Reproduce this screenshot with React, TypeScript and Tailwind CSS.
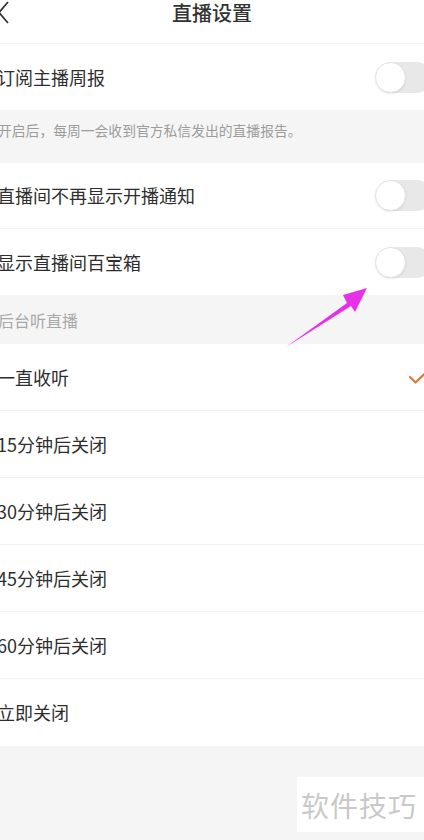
import React from "react";

const font = { fontFamily: '"Noto Sans CJK SC", "Noto Sans", sans-serif' };

function Toggle() {
  return (
    <div className="relative h-[31px] w-[56px] shrink-0 rounded-full bg-[#e8e8e8] -mr-[8px]">
      <div className="absolute left-[-1px] top-0 h-[31px] w-[31px] rounded-full bg-white border border-[#e2e2e2] shadow-[0_1px_2px_rgba(0,0,0,0.08)]" />
    </div>
  );
}

function ToggleRow({ label, border }: { label: string; border?: boolean }) {
  return (
    <div className={`flex h-[66px] items-center justify-between bg-white ${border ? "border-b border-[#efefef]" : ""}`}>
      <span className="-ml-[3px] text-[18px] text-[#2e2e2e]">{label}</span>
      <Toggle />
    </div>
  );
}

function OptionRow({ label, checked, last }: { label: string; checked?: boolean; last?: boolean }) {
  return (
    <div className={`flex items-center justify-between bg-white ${last ? "h-[67px]" : "h-[67px] border-b border-[#efefef]"}`}>
      <span className="-ml-[3px] text-[18px] text-[#2e2e2e]">{label}</span>
      {checked && (
        <svg width="22" height="16" viewBox="0 0 22 16" className="-mr-[6px]">
          <polyline points="2,8 7.5,13.5 19,2.5" fill="none" stroke="#e07a3c" strokeWidth="2.2" strokeLinecap="round" strokeLinejoin="round" />
        </svg>
      )}
    </div>
  );
}

export default function App() {
  return (
    <div className="relative h-[840px] w-[424px] overflow-hidden bg-[#f5f5f5]" style={font}>
      {/* header */}
      <div className="relative flex h-[44px] items-start justify-center border-b border-[#f0f0f0] bg-white pt-[1px]">
        <svg width="10" height="26" viewBox="0 0 10 26" className="absolute left-0 top-0">
          <polyline points="8,2 -1,12.5 8,23" fill="none" stroke="#333333" strokeWidth="1.8" />
        </svg>
        <span className="text-[20px] leading-[24px] font-medium text-[#333333]">直播设置</span>
      </div>

      <ToggleRow label="订阅主播周报" />

      <div className="h-[53px] bg-[#f5f5f5] pt-[10px]">
        <span className="-ml-[2px] block text-[13.8px] leading-[20px] text-[#9c9c9c]">开启后，每周一会收到官方私信发出的直播报告。</span>
      </div>

      <ToggleRow label="直播间不再显示开播通知" border />
      <div className="h-[67px]">
        <ToggleRow label="显示直播间百宝箱" />
      </div>

      <div className="flex h-[48px] items-center bg-[#f5f5f5]">
        <span className="-ml-[2px] text-[16px] text-[#a8a8a8]">后台听直播</span>
      </div>

      <OptionRow label="一直收听" checked />
      <OptionRow label="15分钟后关闭" />
      <OptionRow label="30分钟后关闭" />
      <OptionRow label="45分钟后关闭" />
      <OptionRow label="60分钟后关闭" />
      <OptionRow label="立即关闭" last />

      {/* watermark */}
      <div className="absolute left-[297px] top-[777px] flex h-[55px] w-[127px] items-center bg-white pl-[4px]">
        <span className="text-[28px] tracking-[1px] text-[#c9c9c9]">软件技巧</span>
      </div>

      {/* annotation arrow */}
      <svg className="absolute left-0 top-0" width="424" height="840" viewBox="0 0 424 840">
        <polygon points="286,347 347,303 343,295 367,288 355,312 351,306" fill="#e830e8" />
      </svg>
    </div>
  );
}
